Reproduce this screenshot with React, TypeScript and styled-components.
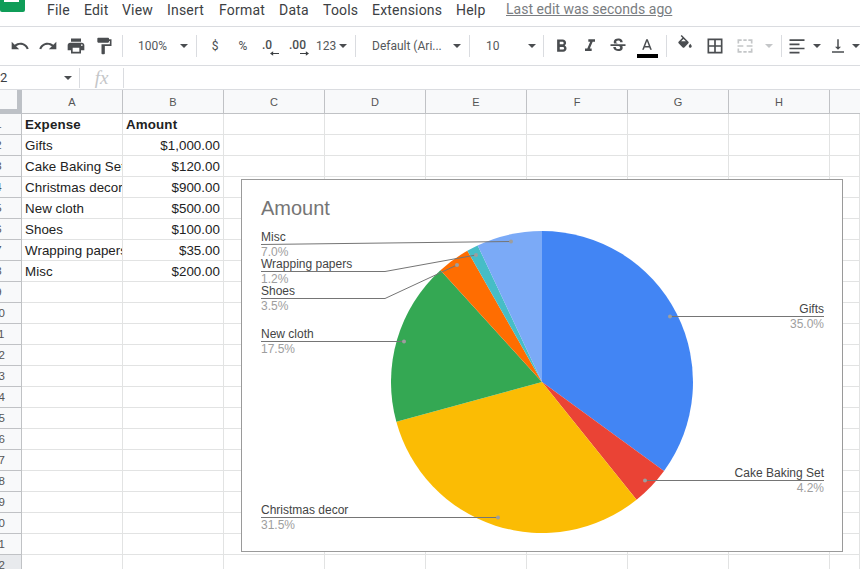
import React from "react";
import styled, { createGlobalStyle } from "styled-components";

const Global = createGlobalStyle`
  html, body { margin: 0; padding: 0; background: #fff; }
  body { font-family: Roboto, "Liberation Sans", sans-serif; }
`;

const Page = styled.div`
  width: 860px;
  height: 569px;
  position: relative;
  overflow: hidden;
  background: #fff;
`;

const MenuBar = styled.div`
  height: 26px;
  display: flex;
  align-items: flex-start;
  border-bottom: 1px solid #dadce0;
  box-sizing: content-box;
`;

const Logo = styled.div`
  width: 25px;
  height: 12px;
  background: #0f9d58;
  border-radius: 0 0 2px 2px;
  position: relative;
  flex: none;
  margin-right: 22px;
  &::after {
    content: "";
    display: block;
    width: 15px;
    height: 2px;
    margin-left: 4px;
    background: #fff;
  }
`;

const MenuItem = styled.span<{ $w: number }>`
  width: ${(p) => p.$w}px;
  flex: none;
  font-size: 14px;
  line-height: 20px;
  letter-spacing: 0.2px;
  color: #3c4043;
`;

const LastEdit = styled.span`
  font-size: 14px;
  line-height: 18px;
  letter-spacing: 0.02px;
  color: #7a7d81;
  text-decoration: underline;
  white-space: nowrap;
`;

const Toolbar = styled.div`
  height: 38px;
  display: flex;
  align-items: center;
  padding-left: 6px;
  border-bottom: 1px solid #dadce0;
  overflow: hidden;
  color: #4a4d50;
`;

const Tool = styled.div<{ $w?: number; $dim?: boolean; $lift?: number }>`
  width: ${(p) => p.$w ?? 28}px;
  height: 28px;
  flex: none;
  box-sizing: border-box;
  padding-bottom: ${(p) => p.$lift ?? 0}px;
  display: flex;
  align-items: center;
  justify-content: center;
  font-size: 12px;
  color: ${(p) => (p.$dim ? "#c4c6c8" : "#4a4d50")};
  svg { display: block; fill: currentColor; fill-rule: evenodd; }
`;

const Sep = styled.div<{ $w?: number }>`
  width: ${(p) => p.$w ?? 9}px;
  height: 22px;
  flex: none;
  display: flex;
  justify-content: center;
  &::before {
    content: "";
    width: 1px;
    background: #dadce0;
  }
`;

const Dropdown = styled.div<{ $w: number; $pr: number; $pl?: number }>`
  width: ${(p) => p.$w}px;
  height: 28px;
  flex: none;
  box-sizing: border-box;
  display: flex;
  align-items: center;
  justify-content: space-between;
  padding: 0 ${(p) => p.$pr}px 0 ${(p) => p.$pl ?? 12}px;
  font-size: 12px;
  color: #55585b;
  white-space: nowrap;
`;

const Caret = styled.span<{ $dim?: boolean }>`
  flex: none;
  width: 0;
  height: 0;
  border-left: 4.5px solid transparent;
  border-right: 4.5px solid transparent;
  border-top: 4.5px solid ${(p) => (p.$dim ? "#c4c6c8" : "#4a4d50")};
`;

const DecimalBox = styled.div<{ $w: number; $pl: number }>`
  width: ${(p) => p.$w}px;
  height: 28px;
  flex: none;
  box-sizing: border-box;
  padding: 6px 0 0 ${(p) => p.$pl}px;
  display: flex;
  flex-direction: column;
  align-items: flex-start;
  font-size: 12px;
  line-height: 14px;
  font-weight: 500;
  color: #4a4d50;
`;

const DecimalArrow = styled.svg<{ $ml: number }>`
  display: block;
  fill: #3c4043;
  margin: -1px 0 0 ${(p) => p.$ml}px;
`;

const ColorBar = styled.div`
  width: 21px;
  height: 4px;
  background: #000;
  margin-top: -1px;
`;

const ColorTool = styled(Tool)`
  flex-direction: column;
  padding-top: 3px;
`;

const FormulaBar = styled.div`
  height: 23px;
  display: flex;
  align-items: center;
  border-bottom: 1px solid #dadce0;
`;

const NameBox = styled.div`
  width: 80px;
  height: 20px;
  box-sizing: border-box;
  display: flex;
  align-items: center;
  justify-content: space-between;
  padding-right: 7px;
  border-right: 1px solid #dadce0;
  font-size: 13px;
  color: #3c4043;
`;

const Fx = styled.div`
  width: 44px;
  height: 20px;
  box-sizing: border-box;
  border-right: 1px solid #dadce0;
  text-align: center;
  font: italic 19px/20px "Liberation Serif", serif;
  color: #c4c6c8;
`;

const Sheet = styled.div`
  display: grid;
  grid-template-columns: 22px repeat(8, 101px) 30px;
  grid-auto-rows: 21px;
  grid-template-rows: 24px;
`;

const Corner = styled.div`
  background: #f8f9fa;
  box-sizing: border-box;
  border-right: 5px solid #bdc1c6;
  border-bottom: 5px solid #bdc1c6;
`;

const ColHead = styled.div<{ $last?: boolean }>`
  background: #f8f9fa;
  box-sizing: border-box;
  border-right: ${(p) => (p.$last ? "0" : "1px solid #c0c2c5")};
  border-bottom: 1px solid #c0c2c5;
  display: flex;
  align-items: center;
  justify-content: center;
  font: 11px "Liberation Sans", Arial, sans-serif;
  color: #555;
`;

const RowHead = styled.div<{ $active?: boolean }>`
  background: ${(p) => (p.$active ? "#e8eaed" : "#f8f9fa")};
  box-sizing: border-box;
  border-right: 1px solid #c0c2c5;
  border-bottom: 1px solid #c0c2c5;
  overflow: hidden;
  font: 11.5px/20px "Liberation Sans", Arial, sans-serif;
  color: #555;
`;

const RowNum = styled.div`
  width: 37px;
  margin-left: -20px;
  text-align: center;
`;

const Cell = styled.div<{ $right?: boolean; $bold?: boolean }>`
  box-sizing: border-box;
  border-right: 1px solid #e2e3e3;
  border-bottom: 1px solid #e2e3e3;
  padding: 0 3px;
  overflow: hidden;
  white-space: nowrap;
  text-align: ${(p) => (p.$right ? "right" : "left")};
  font: ${(p) => (p.$bold ? "bold " : "")}13.33px/22px "Liberation Sans", Arial, sans-serif;
  letter-spacing: ${(p) => (p.$bold ? 0.15 : 0.05)}px;
  color: #222;
`;

const ChartPanel = styled.div`
  position: absolute;
  left: 241px;
  top: 179px;
  width: 602px;
  height: 373px;
  box-sizing: border-box;
  border: 1px solid #9a9a9a;
  background: #fff;
  svg { display: block; position: absolute; left: -1px; top: -1px; }
`;

const ChartTitle = styled.text`
  font: 20px "Liberation Sans", Arial, sans-serif;
  fill: #757575;
`;

const LabelName = styled.text`
  font: 12px "Liberation Sans", Arial, sans-serif;
  fill: #444;
`;

const LabelPct = styled.text`
  font: 12px "Liberation Sans", Arial, sans-serif;
  fill: #9e9e9e;
`;

const Leader = styled.polyline`
  fill: none;
  stroke: #757575;
  stroke-width: 1;
`;

const Dot = styled.circle`
  fill: #9e9e9e;
`;

const Icon = ({ d, size = 20 }: { d: string; size?: number }) => (
  <svg width={size} height={size} viewBox="0 0 24 24"><path d={d} /></svg>
);

const UNDO = "M12.5 8c-2.65 0-5.05.99-6.9 2.6L2 7v9h9l-3.62-3.62c1.39-1.16 3.16-1.88 5.12-1.88 3.54 0 6.55 2.31 7.6 5.5l2.37-.78C21.08 11.03 17.15 8 12.5 8z";
const REDO = "M18.4 10.6C16.55 8.99 14.15 8 11.5 8c-4.65 0-8.58 3.03-9.97 7.22l2.37.78C4.95 12.81 7.96 10.5 11.5 10.5c1.96 0 3.73.72 5.12 1.88L13 16h9V7l-3.6 3.6z";
const PRINT = "M19 8H5c-1.66 0-3 1.34-3 3v6h4v4h12v-4h4v-6c0-1.66-1.34-3-3-3zm-3 11H8v-5h8v5zm3-7c-.55 0-1-.45-1-1s.45-1 1-1 1 .45 1 1-.45 1-1 1zm-1-9H6v4h12V3z";
const PAINT = "M18 4V3c0-.55-.45-1-1-1H5c-.55 0-1 .45-1 1v4c0 .55.45 1 1 1h12c.55 0 1-.45 1-1V6h1v4H9v11c0 .55.45 1 1 1h2c.55 0 1-.45 1-1v-9h8V4h-3z";
const BOLD = "M15.6 10.79c.97-.67 1.65-1.77 1.65-2.79 0-2.26-1.75-4-4-4H7v14h7.04c2.09 0 3.71-1.7 3.71-3.79 0-1.52-.86-2.82-2.15-3.42zM10 6.5h3c.83 0 1.5.67 1.5 1.5s-.67 1.5-1.5 1.5h-3v-3zm3.5 9H10v-3h3.5c.83 0 1.5.67 1.5 1.5s-.67 1.5-1.5 1.5z";
const ITALIC = "M10 4v3h2.21l-3.42 8H6v3h8v-3h-2.21l3.42-8H18V4z";
const STRIKE = "M6.85 7.08C6.85 4.37 9.45 3 12.24 3c1.64 0 3 .49 3.9 1.28.77.65 1.46 1.73 1.46 3.24h-3.01c0-.31-.05-.59-.15-.85-.29-.86-1.2-1.28-2.25-1.28-1.86 0-2.34 1.02-2.34 1.7 0 .48.25.88.74 1.21.38.25.77.48 1.41.7H7.39c-.21-.34-.54-.89-.54-1.92zM21 12v-2H3v2h9.62c1.15.45 1.96.75 1.96 1.97 0 1-.81 1.67-2.28 1.67-1.54 0-2.93-.54-2.93-2.51H6.4c0 .55.08 1.13.24 1.58.81 2.29 3.29 3.3 5.67 3.3 2.27 0 5.3-.89 5.3-4.05 0-.3-.01-1.16-.48-1.96H21z";
const TEXTA = "M11 3 5.5 17h2.25l1.12-3h6.25l1.12 3h2.25L13 3h-2zm-1.38 9L12 5.67 14.38 12H9.62z";
const FILL = "M16.56 8.94L7.62 0 6.21 1.41l2.38 2.38-5.15 5.15c-.59.59-.59 1.54 0 2.12l5.5 5.5c.29.29.68.44 1.06.44s.77-.15 1.06-.44l5.5-5.5c.59-.58.59-1.53 0-2.12zM10 5.21 6.8 8.4h6.4zM19 11.5s-2 2.17-2 3.5c0 1.1.9 2 2 2s2-.9 2-2c0-1.33-2-3.5-2-3.5z";
const BORDERS = "M3 3v18h18V3H3zm8 16H5v-6h6v6zm0-8H5V5h6v6zm8 8h-6v-6h6v6zm0-8h-6V5h6v6z";
const MERGE = "M3 4h5v2H5v3H3V4zm13 0h5v5h-2V6h-3V4zM3 15h2v3h3v2H3v-5zm16 0h2v5h-5v-2h3v-3zM10 4h4v2h-4V4zm0 14h4v2h-4v-2zM3 11h7v2H3v-2zm11 0h7v2h-7v-2z";
const ALIGN = "M3 4h18v2H3V4zm0 5h12v2H3V9zm0 5h18v2H3v-2zm0 5h12v2H3v-2z";
const VALIGN = "M16 13h-3V3h-2v10H8l4 4 4-4zM4 19v2h16v-2H4z";

const menu: [string, number][] = [
  ["File", 37], ["Edit", 38], ["View", 45], ["Insert", 52], ["Format", 60],
  ["Data", 44], ["Tools", 49], ["Extensions", 84], ["Help", 50],
];

const columns = ["A", "B", "C", "D", "E", "F", "G", "H", ""];
const data: [string, string][] = [
  ["Expense", "Amount"],
  ["Gifts", "$1,000.00"],
  ["Cake Baking Set", "$120.00"],
  ["Christmas decor", "$900.00"],
  ["New cloth", "$500.00"],
  ["Shoes", "$100.00"],
  ["Wrapping papers", "$35.00"],
  ["Misc", "$200.00"],
];

const CX = 542;
const CY = 382;
const R = 151;
const slices: [number, string][] = [
  [1000, "#4285f4"], [120, "#ea4335"], [900, "#fbbc04"], [500, "#34a853"],
  [100, "#ff6d01"], [35, "#46bdc6"], [200, "#7baaf7"],
];
const total = slices.reduce((s, [v]) => s + v, 0);
const point = (t: number) => {
  const a = (t / total) * Math.PI * 2;
  return `${(CX + R * Math.sin(a)).toFixed(2)} ${(CY - R * Math.cos(a)).toFixed(2)}`;
};
const wedges = slices.reduce<{ d: string; fill: string; end: number }[]>((acc, [v, fill]) => {
  const start = acc.length ? acc[acc.length - 1].end : 0;
  const end = start + v;
  const large = v / total > 0.5 ? 1 : 0;
  acc.push({ d: `M${CX} ${CY}L${point(start)}A${R} ${R} 0 ${large} 1 ${point(end)}Z`, fill, end });
  return acc;
}, []);

type Label = { name: string; pct: string; x: number; anchor: "start" | "end"; y: number; line: string; dot: [number, number] };
const labels: Label[] = [
  { name: "Misc", pct: "7.0%", x: 261, anchor: "start", y: 241, line: "261,244.5 511,241.5", dot: [511, 241.5] },
  { name: "Wrapping papers", pct: "1.2%", x: 261, anchor: "start", y: 268, line: "261,271.5 385,271.5 476,255", dot: [476, 255] },
  { name: "Shoes", pct: "3.5%", x: 261, anchor: "start", y: 295, line: "261,298.5 385,298.5 457,265", dot: [457, 265] },
  { name: "New cloth", pct: "17.5%", x: 261, anchor: "start", y: 338, line: "261,341.5 404,341.5", dot: [404, 341.5] },
  { name: "Gifts", pct: "35.0%", x: 824, anchor: "end", y: 313, line: "670,316.5 824,316.5", dot: [670, 316.5] },
  { name: "Cake Baking Set", pct: "4.2%", x: 824, anchor: "end", y: 477, line: "645,480.5 824,480.5", dot: [645, 480.5] },
  { name: "Christmas decor", pct: "31.5%", x: 261, anchor: "start", y: 514, line: "261,517.5 498,517.5", dot: [498, 517.5] },
];

const rows = Array.from({ length: 22 }, (_, i) => i);

export default function App() {
  return (
    <Page>
      <Global />
      <MenuBar>
        <Logo />
        {menu.map(([label, w]) => (
          <MenuItem key={label} $w={w}>{label}</MenuItem>
        ))}
        <LastEdit>Last edit was seconds ago</LastEdit>
      </MenuBar>

      <Toolbar>
        <Tool><Icon d={UNDO} /></Tool>
        <Tool><Icon d={REDO} /></Tool>
        <Tool><Icon d={PRINT} /></Tool>
        <Tool><Icon d={PAINT} /></Tool>
        <Sep />
        <Dropdown $w={64} $pr={3} $pl={11}>100%<Caret /></Dropdown>
        <Sep $w={10} />
        <Tool>$</Tool>
        <Tool>%</Tool>
        <DecimalBox $w={28} $pl={5}>
          .0
          <DecimalArrow $ml={8} width="9" height="5" viewBox="0 0 10 5"><path d="M0 2.5 3.5 0v2H10v1H3.5v2z" /></DecimalArrow>
        </DecimalBox>
        <DecimalBox $w={28} $pl={4}>
          .00
          <DecimalArrow $ml={11} width="9" height="5" viewBox="0 0 10 5"><path d="M10 2.5 6.5 0v2H0v1h6.5v2z" /></DecimalArrow>
        </DecimalBox>
        <Dropdown $w={38} $pr={4} $pl={3}>123<Caret /></Dropdown>
        <Sep />
        <Dropdown $w={105} $pr={4.5}>Default (Ari...<Caret /></Dropdown>
        <Sep />
        <Dropdown $w={65} $pr={3.5}>10<Caret /></Dropdown>
        <Sep />
        <Tool $w={27}><Icon d={BOLD} size={21} /></Tool>
        <Tool $w={29}><Icon d={ITALIC} size={20} /></Tool>
        <Tool><Icon d={STRIKE} size={20} /></Tool>
        <ColorTool $w={30}>
          <Icon d={TEXTA} size={18} />
          <ColorBar />
        </ColorTool>
        <Sep />
        <Tool $lift={4}><Icon d={FILL} size={18} /></Tool>
        <Tool $w={31}><Icon d={BORDERS} size={20} /></Tool>
        <Tool $w={30} $dim><Icon d={MERGE} size={20} /></Tool>
        <Tool $w={17}><Caret $dim /></Tool>
        <Sep />
        <Tool $w={22}><Icon d={ALIGN} size={20} /></Tool>
        <Tool $w={17}><Caret /></Tool>
        <Tool $w={26}><Icon d={VALIGN} size={18} /></Tool>
        <Tool $w={9}><Caret /></Tool>
      </Toolbar>

      <FormulaBar>
        <NameBox>2<Caret /></NameBox>
        <Fx>fx</Fx>
      </FormulaBar>

      <Sheet>
        <Corner />
        {columns.map((c, i) => (
          <ColHead key={i} $last={c === ""}>{c}</ColHead>
        ))}
        {rows.map((r) => (
          <React.Fragment key={r}>
            <RowHead $active={r === 21}><RowNum>{r + 1}</RowNum></RowHead>
            {columns.map((_, c) => (
              <Cell key={c} $bold={r === 0} $right={c === 1 && r > 0}>
                {c < 2 && data[r] ? data[r][c] : ""}
              </Cell>
            ))}
          </React.Fragment>
        ))}
      </Sheet>

      <ChartPanel>
        <svg width="602" height="373" viewBox="241 179 602 373">
          <ChartTitle x="261" y="215">Amount</ChartTitle>
          {wedges.map((w) => (
            <path key={w.fill} d={w.d} fill={w.fill} />
          ))}
          {labels.map((l) => (
            <g key={l.name}>
              <LabelName x={l.x} y={l.y} textAnchor={l.anchor}>{l.name}</LabelName>
              <LabelPct x={l.x} y={l.y + 15} textAnchor={l.anchor}>{l.pct}</LabelPct>
              <Leader points={l.line} />
              <Dot cx={l.dot[0]} cy={l.dot[1]} r="2" />
            </g>
          ))}
        </svg>
      </ChartPanel>
    </Page>
  );
}
